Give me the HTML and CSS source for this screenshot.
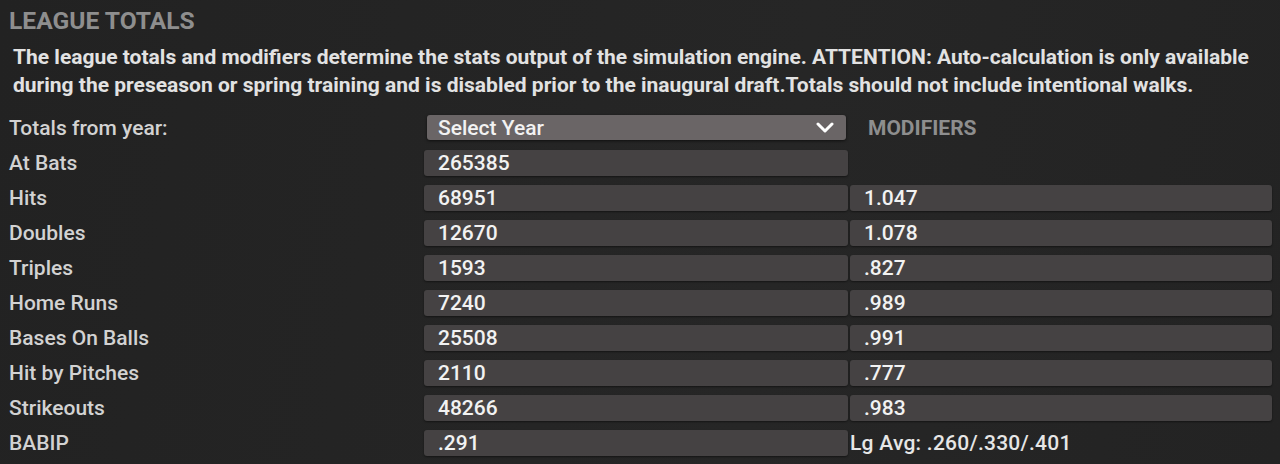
FILE: index.html
```html
<!DOCTYPE html>
<html>
<head>
<meta charset="utf-8">
<link rel="stylesheet" href="styles.css">
</head>
<body>
<div class="panel">
  <h1 class="title">LEAGUE TOTALS</h1>
  <p class="desc">The league totals and modifiers determine the stats output of the simulation engine. ATTENTION: Auto-calculation is only available during the preseason or spring training and is disabled prior to the inaugural draft.Totals should not include intentional walks.</p>
  <div class="grid">
    <div class="label">Totals from year:</div>
    <div class="cell"><div class="select"><span>Select Year</span><svg class="chev" width="18" height="12" viewBox="0 0 18 12"><path d="M2 2 L9 9 L16 2" fill="none" stroke="#fff" stroke-width="3" stroke-linecap="round" stroke-linejoin="round"/></svg></div></div>
    <div class="cell"><div class="head">MODIFIERS</div></div>

    <div class="label">At Bats</div>
    <div class="cell"><div class="input">265385</div></div>
    <div class="cell"></div>

    <div class="label">Hits</div>
    <div class="cell"><div class="input">68951</div></div>
    <div class="cell"><div class="input">1.047</div></div>

    <div class="label">Doubles</div>
    <div class="cell"><div class="input">12670</div></div>
    <div class="cell"><div class="input">1.078</div></div>

    <div class="label">Triples</div>
    <div class="cell"><div class="input">1593</div></div>
    <div class="cell"><div class="input">.827</div></div>

    <div class="label">Home Runs</div>
    <div class="cell"><div class="input">7240</div></div>
    <div class="cell"><div class="input">.989</div></div>

    <div class="label">Bases On Balls</div>
    <div class="cell"><div class="input">25508</div></div>
    <div class="cell"><div class="input">.991</div></div>

    <div class="label">Hit by Pitches</div>
    <div class="cell"><div class="input">2110</div></div>
    <div class="cell"><div class="input">.777</div></div>

    <div class="label">Strikeouts</div>
    <div class="cell"><div class="input">48266</div></div>
    <div class="cell"><div class="input">.983</div></div>

    <div class="label">BABIP</div>
    <div class="cell"><div class="input">.291</div></div>
    <div class="cell"><div class="avg">Lg Avg: .260/.330/.401</div></div>
  </div>
</div>
</body>
</html>
```

FILE: styles.css
```css
html, body {
  margin: 0;
  padding: 0;
  background: #242424;
  height: 464px;
  overflow: hidden;
}
body {
  background: linear-gradient(100deg, #222222 0%, #262626 60%, #232323 100%);
  font-family: Roboto, "Liberation Sans", sans-serif;
}
.panel {
  padding: 8px 10px 0 9px;
}
.title {
  margin: 0;
  font-size: 24.6px;
  line-height: 26px;
  font-weight: 700;
  color: #8e8e8e;
}
.desc {
  margin: 9px 0 11px 0;
  padding-left: 4px;
  font-size: 21px;
  line-height: 28px;
  font-weight: 700;
  color: #e2e2e2;
}
.grid {
  display: grid;
  grid-template-columns: 413px 424px 422px;
  grid-auto-rows: 35px;
  column-gap: 2px;
}
.label {
  display: flex;
  align-items: center;
  font-size: 21px;
  font-weight: 500;
  color: #d2d2d2;
}
.cell {
  display: flex;
  align-items: center;
}
.input {
  width: 100%;
  height: 26px;
  box-sizing: border-box;
  padding-left: 14px;
  display: flex;
  align-items: center;
  background: #454243;
  border-radius: 3px;
  box-shadow: 0 1px 2px rgba(0, 0, 0, 0.45);
  font-size: 21px;
  font-weight: 500;
  color: #f2f2f2;
}
.select {
  margin: 0 2px 0 3px;
  width: 100%;
  height: 25px;
  box-sizing: border-box;
  padding: 0 12px 0 11px;
  display: flex;
  align-items: center;
  justify-content: space-between;
  background: #6a6566;
  border-radius: 3px;
  box-shadow: 0 1px 3px rgba(0, 0, 0, 0.6);
  font-size: 21px;
  font-weight: 500;
  color: #f2f2f2;
}
.chev {
  display: block;
}
.head {
  padding-left: 18px;
  font-size: 21px;
  font-weight: 700;
  color: #8e8e8e;
}
.avg {
  padding-left: 0;
  font-size: 21px;
  font-weight: 500;
  letter-spacing: 0.25px;
  color: #e6e6e6;
}
```
